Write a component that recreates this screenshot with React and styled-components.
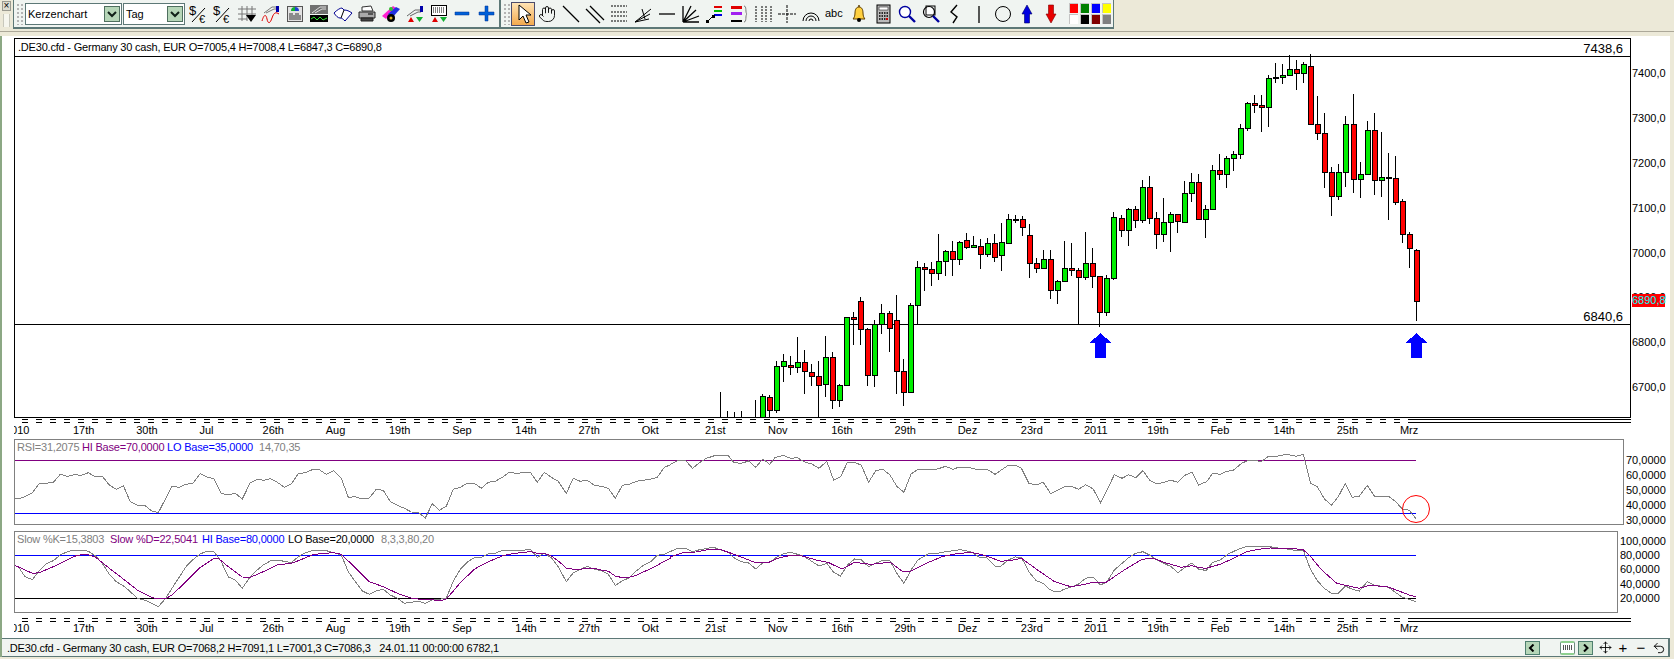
import React from 'react';
import styled, { createGlobalStyle } from 'styled-components';
import { Hand, Move, Undo2 } from 'lucide-react';

const GlobalStyle = createGlobalStyle`
  html, body {
    margin: 0;
    width: 1674px;
    height: 659px;
    overflow: hidden;
    background: #ece9d8;
    font-family: "Liberation Sans", Arial, sans-serif;
    font-size: 11px;
    color: #000;
  }
`;

const BAR_BG = '#f0f4f1';
const BAR_LINE = '#5d7877';
const GREY = '#808080';
const PURPLE = '#800080';
const BLUE = '#0000ff';

/* ---- chart data, page pixels ---- */

// [colour, body top, body bottom, wick top, wick bottom]; null = no bar that day
const candles = [
  ['w', 0, 0, 392, 417], ['w', 0, 0, 411, 417], ['w', 0, 0, 412, 417], ['w', 0, 0, 411, 417], null,
  ['w', 0, 0, 400, 417], ['g', 396, 420, 394, 417], ['r', 397, 410, 395, 417], ['g', 366, 410, 361, 412],
  ['g', 361, 366, 354, 381], ['r', 365, 367, 356, 374], ['g', 362, 367, 337, 372], ['r', 362, 371, 350, 393],
  ['r', 372, 376, 364, 385], ['r', 376, 385, 361, 417], ['g', 357, 384, 336, 396], ['r', 357, 400, 352, 408],
  ['g', 385, 400, 384, 406], ['g', 317, 385, 317, 385], ['r', 317, 319, 312, 344], ['r', 301, 329, 297, 344],
  ['r', 329, 375, 328, 385], ['g', 324, 375, 320, 386], ['g', 313, 324, 304, 333], ['r', 313, 328, 311, 351],
  ['r', 320, 371, 295, 393], ['r', 371, 392, 359, 405], ['g', 305, 392, 303, 392], ['g', 267, 305, 261, 324],
  ['r', 267, 269, 263, 290], ['r', 269, 273, 262, 285], ['g', 261, 273, 234, 279], ['g', 251, 261, 250, 275],
  ['r', 251, 259, 241, 275], ['g', 242, 259, 241, 264], ['r', 240, 247, 233, 248], ['g', 245, 247, 236, 247],
  ['r', 246, 254, 239, 268], ['g', 243, 254, 238, 256], ['r', 243, 257, 234, 261], ['g', 242, 255, 223, 270],
  ['g', 219, 243, 214, 243], ['k', 219, 220, 215, 222], ['r', 219, 227, 216, 235], ['r', 235, 263, 224, 277],
  ['r', 263, 268, 258, 272], ['g', 259, 268, 250, 268], ['r', 259, 290, 250, 298], ['g', 281, 290, 280, 303],
  ['g', 268, 281, 241, 281], ['r', 268, 270, 243, 275], ['r', 270, 277, 268, 324], ['g', 263, 277, 232, 279],
  ['r', 263, 276, 248, 287], ['r', 276, 312, 276, 326], ['g', 278, 312, 275, 315], ['g', 217, 278, 212, 279],
  ['r', 218, 230, 215, 236], ['g', 209, 230, 208, 245], ['r', 209, 220, 206, 227], ['g', 187, 220, 180, 222],
  ['r', 187, 218, 176, 223], ['r', 218, 234, 212, 248], ['g', 222, 234, 198, 241], ['g', 214, 222, 212, 251],
  ['r', 214, 221, 214, 232], ['g', 193, 222, 181, 222], ['g', 182, 193, 173, 201], ['r', 182, 219, 174, 219],
  ['g', 209, 219, 205, 237], ['g', 170, 209, 165, 209], ['r', 170, 174, 154, 179], ['g', 158, 174, 156, 187],
  ['g', 154, 158, 151, 170], ['g', 128, 154, 124, 158], ['g', 103, 128, 102, 130], ['r', 103, 105, 95, 112],
  ['r', 105, 107, 95, 131], ['g', 78, 107, 75, 126], ['k', 77, 78, 63, 82], ['g', 75, 77, 64, 83],
  ['g', 69, 75, 55, 75], ['r', 69, 73, 60, 89], ['g', 64, 73, 62, 82], ['r', 66, 124, 54, 124],
  ['r', 124, 133, 96, 139], ['r', 133, 172, 113, 187], ['r', 172, 196, 167, 215], ['g', 172, 196, 164, 199],
  ['g', 124, 172, 116, 186], ['r', 124, 179, 94, 192], ['g', 174, 179, 162, 197], ['g', 130, 174, 121, 174],
  ['r', 130, 180, 113, 194], ['g', 177, 180, 132, 196], ['k', 177, 178, 153, 219], ['r', 178, 202, 156, 204],
  ['r', 201, 234, 199, 242], ['r', 234, 248, 232, 267], ['r', 250, 301, 249, 320],
];

// traced curves come in runs, each with the origin and scale it was read at
const run = (x0, y0, sx, pts) => pts.map(([x, y]) => `${(x0 + x / sx).toFixed(1)},${(y0 + y / 3).toFixed(1)}`);

const rsiLine = [
  ...run(0, 385, 3, [[44,339],[55,341],[75,335],[97,323],[118,295],[139,295],[160,292],[181,268],[202,274],[223,269],[244,271],[265,263],[286,276],[307,274],[328,300],[349,313],[370,302],[391,350],[412,360],[433,360],[454,377],[475,383],[516,304],[537,307],[558,298],[579,295],[600,266],[621,276],[642,281],[664,325],[685,330],[706,325],[727,342],[751,293],[772,283],[790,286],[811,281],[832,292],[853,307],[874,297],[895,266],[916,263],[937,254],[958,254],[979,268],[1002,257],[1024,280],[1045,337],[1066,335],[1087,342],[1108,339],[1129,313],[1150,316],[1171,350],[1192,361],[1213,370],[1234,381],[1255,382]]),
  ...run(410, 436, 3, [[46,246],[67,203],[88,223],[109,211],[130,160],[151,154],[172,142],[193,142],[214,157],[235,139],[256,136],[277,124],[298,109],[319,112],[361,109],[382,139],[403,109],[424,124],[445,136],[469,172],[490,127],[511,136],[532,133],[553,148],[574,151],[595,157],[616,187],[637,148],[658,145],[679,136],[700,133],[721,130],[742,124],[763,94],[780,87]]),
  ...run(660, 400, 2.8, [[30,193],[50,182],[72,182],[91,205],[111,188],[130,175],[150,168],[170,165],[190,166],[207,188],[228,190],[248,183],[268,202],[288,177],[307,193],[322,173],[345,166],[365,175],[385,173],[405,186],[425,192],[445,205],[467,184],[486,240],[505,231],[525,187],[545,187],[564,196],[584,247],[604,212],[624,208],[644,225],[663,259],[683,277],[703,222],[722,208],[751,208],[777,207],[800,199],[820,208],[838,201],[870,204],[895,210],[915,207],[938,223],[975,196],[995,196],[1012,205],[1033,250],[1053,255],[1073,247],[1094,281],[1133,260],[1155,260],[1172,268],[1192,254],[1213,267],[1233,308],[1252,270],[1272,224],[1294,235],[1312,224],[1332,233],[1352,212],[1372,242],[1392,252],[1431,241],[1450,247],[1470,226],[1489,216],[1508,256]]),
  ...run(1200, 405, 3, [[0,238],[20,230],[38,205],[60,208],[80,199],[100,196],[125,175],[145,166],[185,169],[205,154],[235,153],[260,148],[288,154],[310,148],[332,235],[352,245],[373,281],[394,301],[415,275],[436,235],[457,277],[478,274],[502,241],[523,273],[565,273],[586,289],[607,312],[628,316],[648,341]]),
].join(' ');

const slowK = [
  ...run(0, 385, 3, [[44,542],[55,545],[75,575],[97,584],[118,557],[139,536],[160,527],[181,510],[202,500],[223,495],[244,495],[265,499],[286,512],[307,535],[328,568],[349,590],[370,602],[391,620],[412,640],[433,645],[454,654],[475,665],[497,640],[516,610],[558,545],[579,524],[600,507],[621,499],[642,500],[664,530],[685,576],[706,585],[727,610],[751,575],[772,555],[790,540],[811,528],[832,525],[874,533],[895,515],[916,503],[937,497],[958,495],[979,497],[1002,503],[1024,510],[1045,560],[1066,590],[1087,618],[1108,628],[1129,618],[1150,613],[1171,630],[1192,640],[1213,655],[1234,652],[1255,648]]),
  ...run(410, 436, 3, [[46,502],[67,492],[88,490],[109,487],[130,435],[151,400],[172,378],[193,365],[214,364],[235,353],[256,352],[277,343],[340,343],[361,340],[382,364],[403,352],[424,365],[445,392],[469,437],[490,410],[511,400],[532,391],[553,400],[574,404],[595,415],[616,448],[637,435],[658,425],[679,405],[700,388],[721,378],[742,358],[763,355],[780,347]]),
  ...run(660, 400, 2.8, [[50,445],[72,445],[91,455],[111,449],[150,442],[170,450],[190,455],[207,473],[228,485],[248,489],[268,507],[288,488],[307,487],[322,475],[345,461],[365,457],[385,463],[405,470],[445,498],[467,490],[486,517],[505,528],[525,495],[545,477],[564,480],[584,500],[604,490],[624,481],[644,482],[663,520],[683,550],[703,510],[722,480],[751,462],[777,460],[800,455],[840,449],[870,455],[895,472],[915,474],[938,498],[955,498],[975,480],[995,471],[1012,472],[1033,515],[1053,542],[1073,550],[1090,568],[1105,575],[1120,575],[1130,568],[1155,560],[1172,552],[1192,535],[1213,531],[1233,555],[1252,545],[1272,510],[1294,490],[1312,473],[1332,460],[1352,455],[1372,466],[1392,480],[1431,500],[1450,518],[1470,502],[1489,489],[1508,507]]),
  ...run(1200, 405, 3, [[0,492],[18,497],[38,472],[60,465],[85,447],[110,435],[140,424],[175,426],[200,424],[235,429],[270,433],[290,438],[310,435],[330,490],[352,527],[373,550],[394,565],[415,565],[436,543],[457,553],[478,558],[502,530],[523,540],[565,547],[586,562],[607,577],[628,583],[648,590]]),
].join(' ');

const slowD = [
  ...run(0, 385, 3, [[44,541],[75,555],[97,565],[118,563],[160,545],[202,525],[223,514],[244,509],[265,509],[286,516],[328,550],[370,582],[412,615],[454,637],[475,642],[497,641],[516,630],[558,590],[600,548],[642,520],[655,520],[685,545],[727,576],[751,577],[790,560],[832,540],[874,535],[895,527],[937,510],[958,506],[1002,503],[1024,508],[1066,548],[1108,590],[1150,605],[1192,625],[1234,639],[1255,642]]),
  ...run(410, 436, 3, [[30,491],[60,490],[88,495],[109,489],[130,465],[151,440],[172,420],[193,400],[214,388],[235,378],[256,368],[277,360],[298,355],[340,349],[361,347],[382,352],[403,352],[424,360],[445,375],[469,396],[490,400],[511,400],[532,397],[553,397],[574,402],[595,406],[616,420],[637,425],[658,424],[679,418],[700,408],[721,399],[742,388],[763,376],[780,368]]),
  ...run(660, 400, 2.8, [[30,470],[65,458],[100,456],[130,450],[170,449],[200,460],[225,470],[265,487],[305,487],[330,475],[365,466],[395,467],[440,481],[470,487],[510,507],[545,487],[590,493],[645,487],[680,515],[700,515],[745,490],[790,470],[825,462],[870,457],[905,465],[955,484],[995,479],[1012,475],[1060,512],[1105,545],[1150,560],[1190,553],[1215,546],[1250,546],[1300,510],[1350,478],[1380,475],[1420,490],[1460,502],[1490,497]]),
  ...run(1200, 405, 3, [[0,488],[18,490],[60,478],[105,458],[140,440],[175,433],[210,429],[270,430],[310,434],[332,455],[365,495],[410,535],[436,541],[478,550],[502,543],[523,542],[565,546],[607,562],[628,570],[648,575]]),
].join(' ');

const dateLabels = ['17th', '30th', 'Jul', '26th', 'Aug', '19th', 'Sep', '14th', '27th', 'Okt', '21st', 'Nov', '16th', '29th', 'Dez', '23rd', '2011', '19th', 'Feb', '14th', '25th', 'Mrz'];
const priceLabels = ['7400,0', '7300,0', '7200,0', '7100,0', '7000,0', '6900,0', '6800,0', '6700,0'];
const rsiLabels = ['70,0000', '60,0000', '50,0000', '40,0000', '30,0000'];
const stochLabels = ['100,0000', '80,0000', '60,0000', '40,0000', '20,0000'];
const swatches = ['#ff0000', '#008000', '#0000ff', '#ffff00', '#ffffff', '#000000', '#800000', '#808080'];

/* ---- toolbars ---- */

const Page = styled.div`
  display: flex;
  flex-direction: column;
  width: 1674px;
  height: 659px;
`;

const TopBar = styled.div`
  display: flex;
  height: 29px;
  flex: none;
`;

const DockHandle = styled.div`
  width: 13px;
  flex: none;
  display: flex;
  flex-direction: column;
  align-items: center;
  padding-top: 1px;
  box-sizing: border-box;
`;

const CloseBox = styled.div`
  width: 9px;
  height: 10px;
  border: 1px solid #9a9a90;
  box-sizing: border-box;
  font-size: 10px;
  line-height: 8px;
  text-align: center;
  background: #dcdcd0;
`;

const DockLines = styled.div`
  width: 5px;
  height: 13px;
  margin-top: 3px;
  border-left: 1px solid #c8c8bc;
  border-right: 1px solid #c8c8bc;
  background: #f6f6ee;
`;

const Toolbar = styled.div`
  display: flex;
  align-items: center;
  height: 29px;
  box-sizing: border-box;
  background: ${BAR_BG};
  border-left: 1px solid ${BAR_LINE};
  border-right: 1px solid ${BAR_LINE};
  border-bottom: 2px solid ${BAR_LINE};
  padding-left: 2px;
`;

const Grip = styled.div`
  width: 8px;
  height: 22px;
  flex: none;
  background-image: radial-gradient(#b4b4b4 1.1px, transparent 1.2px);
  background-size: 4px 4px;
`;

const Combo = styled.div`
  display: flex;
  align-items: center;
  justify-content: space-between;
  width: ${p => p.$width}px;
  height: 22px;
  margin-left: ${p => p.$gap}px;
  flex: none;
  box-sizing: border-box;
  padding: 0 1px 0 2px;
  background: #fff;
  border: 1px solid ${BAR_LINE};
`;

const ComboArrow = styled.div`
  width: 16px;
  height: 16px;
  box-sizing: border-box;
  display: flex;
  align-items: center;
  justify-content: center;
  background: #b6d6b8;
  border: 1px solid #4f6f5f;
`;

const ToolSlot = styled.div`
  width: 24px;
  height: 24px;
  flex: none;
  display: flex;
  align-items: center;
  justify-content: center;
  box-sizing: border-box;
  ${p => p.$active && `
    background: linear-gradient(#ffe3b4, #f2a94e);
    border: 1px solid #4c4c6c;
  `}
`;

const SlotGap = styled.div`
  width: ${p => p.$width}px;
  flex: none;
`;

const Palette = styled.div`
  display: grid;
  grid-template-columns: repeat(4, 9px);
  grid-auto-rows: 10px;
  gap: 1px 2px;
  margin: 0 2px 0 6px;
`;

const Swatch = styled.div`
  box-sizing: border-box;
  background: ${p => p.$color};
  border-top: 1px solid #c4c4c4;
  border-left: 1px solid #c4c4c4;
`;

const BarShadow = styled.div`
  height: 7px;
  flex: none;
  box-sizing: border-box;
  padding-top: 2px;
  &::before {
    content: '';
    display: block;
    height: 1px;
    background: #aca899;
  }
`;

/* ---- chart window ---- */

const Workspace = styled.div`
  flex: none;
  height: 621px;
  margin-right: 4px;
  box-sizing: border-box;
  padding: 2px 0 0 12px;
  background: #fff;
  border-left: 2px solid #8ca884;
`;

const ChartRow = styled.div`
  display: flex;
  height: ${p => p.$height}px;
  margin-top: ${p => p.$top || 0}px;
`;

const Frame = styled.div`
  position: relative;
  width: ${p => p.$width}px;
  height: 100%;
  flex: none;
  box-sizing: border-box;
  border: 1px solid ${p => p.$line};
  svg { display: block; }
`;

const ChartTitle = styled.div`
  position: absolute;
  left: 3px;
  top: 2px;
  white-space: pre;
  line-height: 13px;
  letter-spacing: -0.2px;
`;

const LevelTag = styled.div`
  position: absolute;
  right: 7px;
  top: ${p => p.$top}px;
  font-size: 13px;
  line-height: 15px;
`;

const Legend = styled.div`
  position: absolute;
  left: 2px;
  top: 1px;
  display: flex;
  line-height: 13px;
  white-space: pre;
  letter-spacing: -0.2px;
`;

const LegendItem = styled.span`
  width: ${p => p.$width}px;
  flex: none;
  color: ${p => p.$color};
`;

const ValueAxis = styled.div`
  position: relative;
  display: flex;
  flex-direction: column;
  padding: ${p => p.$top}px 0 0 ${p => p.$left}px;
`;

const AxisLabel = styled.div`
  height: ${p => p.$step}px;
  flex: none;
  display: flex;
  align-items: center;
`;

const LastPrice = styled.div`
  position: absolute;
  left: 1px;
  top: 256px;
  width: 33px;
  height: 13px;
  line-height: 13px;
  background: #ff0000;
  color: #00ffff;
`;

const DateRail = styled.div`
  height: 5px;
  margin-top: ${p => p.$top}px;
  width: 1617px;
  display: flex;
`;

const DashedRail = styled.div`
  width: 1399px;
  flex: none;
  background:
    repeating-linear-gradient(90deg, transparent 0 8px, #000 8px 14px) 0 0 / 100% 1px no-repeat,
    repeating-linear-gradient(90deg, transparent 0 8px, #000 8px 14px) 0 3px / 100% 1px no-repeat;
`;

const SolidRail = styled.div`
  flex: 1;
  box-sizing: border-box;
  height: 4px;
  border-top: 1px solid #000;
  border-bottom: 1px solid #000;
`;

const DateAxis = styled.div`
  display: flex;
  width: 1600px;
  height: ${p => p.$height}px;
  line-height: ${p => p.$height}px;
  overflow: hidden;
`;

const FirstDate = styled.span`
  width: 68px;
  margin-left: -9px;
  flex: none;
`;

const DateCell = styled.span`
  width: 63.2px;
  flex: none;
`;

const StatusBar = styled.div`
  display: flex;
  align-items: center;
  justify-content: space-between;
  height: 19px;
  margin: 4px 0 0 -12px;
  box-sizing: border-box;
  padding-left: 5px;
  background: ${BAR_BG};
  border: 1px solid ${BAR_LINE};
  border-left: none;
  border-right-width: 2px;
  white-space: pre;
`;

const StatusText = styled.span`
  letter-spacing: -0.2px;
`;

const ScrollControls = styled.div`
  display: flex;
  align-items: center;
  height: 100%;
`;

const NavButton = styled.div`
  width: 15px;
  height: 14px;
  flex: none;
  display: flex;
  align-items: center;
  justify-content: center;
  box-sizing: border-box;
  background: #b6d6b8;
  border: 1px solid #4f7f6f;
  margin-left: ${p => p.$gap || 0}px;
`;

const ScrollTrack = styled.div`
  width: 20px;
  height: 14px;
  flex: none;
  background-image: radial-gradient(#c8c8c8 0.6px, transparent 0.7px);
  background-size: 2px 2px;
`;

const ScrollThumb = styled.div`
  width: 15px;
  height: 14px;
  flex: none;
  box-sizing: border-box;
  border: 1px solid #6f8f80;
  border-top: 2px solid #8fd08f;
  border-bottom: 2px solid #8fd08f;
  border-radius: 2px;
  background: repeating-linear-gradient(90deg, #555 0 1px, #fff 1px 2px) center / 9px 5px no-repeat #fff;
`;

const ViewButton = styled.div`
  width: 18px;
  height: 17px;
  flex: none;
  display: flex;
  align-items: center;
  justify-content: center;
  font-size: 15px;
  line-height: 15px;
`;

/* ---- drawings ---- */

const Ico = ({ children, size = 20 }) => (
  <svg width={size} height={size} viewBox="0 0 20 20" fill="none">{children}</svg>
);

const DollarEuro = () => (
  <Ico>
    <text x="0" y="11" fontSize="13" fontFamily="Liberation Sans" fill="#000">$</text>
    <text x="10" y="19" fontSize="11" fontFamily="Liberation Sans" fill="#000">€</text>
    <path d="M3 18 L16 4" stroke="#000" />
  </Ico>
);

const gridDrop = (
  <Ico>
    <path d="M5 2v15M10 2v15M15 2v9M1 5h18M1 10h18M1 15h9" stroke="#777" />
    <path d="M9 11h10l-5 7z" fill="#000" />
  </Ico>
);
const trendWave = (
  <Ico>
    <path d="M3 9l8-6h5M5 9l8-4h3" stroke="#777" />
    <rect x="15" y="2" width="3" height="6" fill="#00a" />
    <path d="M1 17c2-7 4-7 5-2s3 5 5-1 4-6 7-4" stroke="#e00000" />
  </Ico>
);
const chartBox = (
  <Ico>
    <rect x="2.5" y="2.5" width="15" height="15" fill="#e2e2e2" stroke="#555" />
    <path d="M10 3a4 4 0 014 4h-4z" fill="#2040d0" />
    <path d="M10 3a4 4 0 00-4 4h4z" fill="#10b030" />
    <path d="M5 9v7M7 9v7M9 11v5M11 9v7M13 9v7M15 11v5" stroke="#333" />
  </Ico>
);
const bannerChart = (
  <Ico>
    <rect x="1" y="1" width="18" height="9" fill="#707070" />
    <path d="M3 9l8-6h6M6 9l7-4h4" stroke="#ddd" />
    <rect x="1" y="11" width="18" height="7" fill="#000" />
    <path d="M2 15l3-2 3 3 3-3 3 3 4-2" stroke="#30e030" />
  </Ico>
);
const bookOpen = (
  <Ico>
    <path d="M1 9c3-3 6-5 8-5l2 2c3 0 5 1 8 3l-7 8c-2-2-3-3-5-3-2 0-4-2-6-5z" fill="#fff" stroke="#000090" />
    <path d="M8 14L11 6" stroke="#000" />
  </Ico>
);
const printer = (
  <Ico>
    <path d="M5 3l9-1 2 5H5z" fill="#fff" stroke="#333" />
    <path d="M2 8h16v6H2z" fill="#aaa" stroke="#222" />
    <path d="M4 14h12v3H4z" fill="#444" stroke="#222" />
    <path d="M11 10h5" stroke="#000" />
  </Ico>
);
const paintSet = (
  <Ico>
    <path d="M1 12L12 2l3 2L5 15z" fill="#ff20d0" />
    <path d="M7 10l8-7 4 2-8 9z" fill="#2030e0" />
    <circle cx="10" cy="5" r="2" fill="#30c030" />
    <circle cx="10" cy="14" r="4" fill="#000" />
    <circle cx="10" cy="14" r="1.5" fill="#e0b020" />
  </Ico>
);
const fanTriangles = (
  <Ico>
    <path d="M2 12L10 6h6M5 12l8-4h3" stroke="#666" />
    <rect x="15" y="2" width="3" height="6" fill="#00a" />
    <path d="M3 18l3-5 3 5z" fill="#e00000" />
    <path d="M11 13h7l-3.5 5z" fill="#10b030" />
  </Ico>
);
const keyList = (
  <Ico>
    <rect x="2.5" y="1.5" width="15" height="10" fill="#fff" stroke="#000" />
    <path d="M4 4h12M4 6h12M4 8h12" stroke="#000" strokeDasharray="1 1" />
    <path d="M3 18l3-5 3 5z" fill="#e00000" />
    <path d="M11 13h7l-3.5 5z" fill="#10b030" />
  </Ico>
);
const minusBlue = (
  <Ico><path d="M2 8h14v3H2z" fill="#0060d8" stroke="#003090" strokeWidth=".5" /></Ico>
);
const plusBlue = (
  <Ico><path d="M8 2h3v6h6v3h-6v6H8v-6H2V8h6z" fill="#0060d8" stroke="#003090" strokeWidth=".5" /></Ico>
);

const firstTools = [
  <DollarEuro />, <DollarEuro />, gridDrop, trendWave, chartBox, bannerChart,
  bookOpen, printer, paintSet, fanTriangles, keyList, minusBlue, plusBlue,
];

const cursorArrow = (
  <Ico><path d="M6 1v15l4-4 3 7 3-1-3-7h5z" fill="#fff" stroke="#000" /></Ico>
);
const drawingTools = [
  <Hand size={18} strokeWidth={1.2} />,
  <Ico><path d="M2 2l16 16" stroke="#000" strokeWidth="1.3" /></Ico>,
  <Ico><path d="M1 5l14 14M5 2l14 14" stroke="#000" strokeWidth="1.3" /></Ico>,
  <Ico><path d="M2 2h16M2 8h16M2 12h16M2 17h16" stroke="#000" strokeDasharray="2 1" /></Ico>,
  <Ico><path d="M2 18L18 5M2 18L17 10M2 18l14-3M9 5l3 10" stroke="#000" /></Ico>,
  <Ico><path d="M2 10h16" stroke="#000" strokeWidth="1.3" /></Ico>,
  <Ico><path d="M2 18V2M2 18L10 2M2 18L15 6M2 18l16-6M2 18h16" stroke="#000" strokeWidth="1.3" /></Ico>,
  <Ico>
    <path d="M9 2h8v2H9z" fill="#e00000" /><path d="M9 6h8v2H9z" fill="#00c000" /><path d="M9 10h8v2H9z" fill="#0000e0" />
    <path d="M2 18l6-6" stroke="#000" /><rect x="1" y="16" width="3" height="3" fill="#000" /><rect x="7" y="11" width="3" height="3" fill="#000" />
  </Ico>,
  <Ico>
    <path d="M2 2h11v3H2z" fill="#e00000" /><path d="M2 8h11v3H2z" fill="#a020f0" /><path d="M2 16h11v2H2z" fill="#000" />
    <path d="M15 2c3 0 1 7 3 8-2 1 0 8-3 8" stroke="#777" />
  </Ico>,
  <Ico><path d="M3 2v16M9 2v16M13 2v16M18 2v16" stroke="#000" strokeDasharray="2 1" /></Ico>,
  <Ico><path d="M10 1v18M1 10h18" stroke="#000" strokeDasharray="3 1" /></Ico>,
  <Ico><path d="M2 17a8 8 0 0116 0M5 17a5 5 0 0110 0M8 17a2 2 0 014 0" stroke="#000" /></Ico>,
  <Ico><text x="0" y="13" fontSize="11" fontFamily="Liberation Sans" fill="#000">abc</text></Ico>,
  <Ico>
    <path d="M10 3c-3 0-4 3-4 6 0 3-1 5-2 6h12c-1-1-2-3-2-6 0-3-1-6-4-6z" fill="#ffd040" stroke="#604000" />
    <circle cx="10" cy="2" r="1" fill="#604000" /><circle cx="10" cy="16" r="2" fill="#000" />
  </Ico>,
  <Ico>
    <rect x="4" y="1" width="13" height="18" fill="#bbb" stroke="#000" />
    <rect x="6" y="3" width="9" height="3" fill="#fff" stroke="#000" strokeWidth=".5" />
    <path d="M6 9h9M6 12h9M6 15h7" stroke="#000" strokeWidth="1.4" strokeDasharray="1.5 1" />
    <rect x="13" y="14" width="2" height="2" fill="#d00000" />
  </Ico>,
  <Ico><circle cx="8" cy="8" r="5.5" fill="#fff" stroke="#0000a0" strokeWidth="1.4" /><path d="M12 12l6 6" stroke="#0000a0" strokeWidth="2.4" /></Ico>,
  <Ico><circle cx="8" cy="8" r="5.5" fill="#fff" stroke="#000" strokeWidth="1.2" /><rect x="5" y="2" width="9" height="9" stroke="#000" /><path d="M12 12l6 6" stroke="#0000a0" strokeWidth="2.4" /></Ico>,
  <Ico><path d="M12 1L6 8l6 5-4 6" stroke="#000" strokeWidth="1.4" /></Ico>,
  <Ico><path d="M10 2v17" stroke="#000" strokeWidth="1.3" /></Ico>,
  <Ico><circle cx="10" cy="10" r="7.5" stroke="#000" /></Ico>,
  <Ico><path d="M10 1l5 9h-2.5v9h-5v-9H5z" fill="#0000e0" stroke="#000060" strokeWidth=".6" /></Ico>,
  <Ico><path d="M10 19l5-9h-2.5V1h-5v9H5z" fill="#e80000" stroke="#800000" strokeWidth=".6" /></Ico>,
];

const Chevron = ({ left }) => (
  <svg width="9" height="8" viewBox="0 0 9 8">
    {left
      ? <path d="M5.5 0.5 2 4l3.5 3.5" fill="none" stroke="#000" strokeWidth="2" />
      : <path d="M3 0.5 6.5 4 3 7.5" fill="none" stroke="#000" strokeWidth="2" />}
  </svg>
);

const ComboChevron = () => (
  <svg width="10" height="8" viewBox="0 0 10 8">
    <path d="M1 2l4 4 4-4" fill="none" stroke="#102018" strokeWidth="2" />
  </svg>
);

const CANDLE_FILL = { g: '#00ee00', r: '#ff0000', k: '#000' };

const CandleBars = () => candles.map((c, i) => {
  if (!c) return null;
  const [kind, top, bottom, wickTop, wickBottom] = c;
  const x = Math.floor(720.3 + 7.03 * i);
  return (
    <g key={i}>
      <rect x={x} y={wickTop} width="1" height={wickBottom - wickTop + 1} fill="#000" />
      {kind !== 'w' && (
        <rect x={x - 1.5} y={top + 0.5} width="5" height={bottom - top} fill={CANDLE_FILL[kind]} stroke="#000" />
      )}
    </g>
  );
});

const BlueArrow = ({ x }) => (
  <path d={`M${x} 333l11 10h-5.500v15h-11v-15h-5.500z`} fill={BLUE} />
);

const MainChart = () => (
  <svg width="1615" height="378" viewBox="15 39 1615 378" shapeRendering="crispEdges">
    <rect x="15" y="56" width="1615" height="1" fill="#000" />
    <rect x="15" y="324" width="1615" height="1" fill="#000" />
    <CandleBars />
    <BlueArrow x={1100.5} />
    <BlueArrow x={1416.5} />
  </svg>
);

const RsiChart = () => (
  <svg width="1608" height="84" viewBox="15 440 1608 84" shapeRendering="crispEdges" fill="none">
    <rect x="15" y="460" width="1401" height="1" fill={PURPLE} />
    <rect x="15" y="513" width="1401" height="1" fill={BLUE} />
    <polyline points={rsiLine} stroke={GREY} />
    <circle cx="1416" cy="509" r="13.500" stroke="#ff0000" shapeRendering="auto" />
  </svg>
);

const StochChart = () => (
  <svg width="1602" height="80" viewBox="15 532 1602 80" shapeRendering="crispEdges" fill="none">
    <rect x="15" y="555" width="1401" height="1" fill={BLUE} />
    <rect x="15" y="598" width="1401" height="1" fill="#000" />
    <polyline points={slowK} stroke={GREY} />
    <polyline points={slowD} stroke={PURPLE} />
  </svg>
);

const DateRow = ({ height }) => (
  <DateAxis $height={height}>
    <FirstDate>2010</FirstDate>
    {dateLabels.map((label, i) => <DateCell key={i}>{label}</DateCell>)}
  </DateAxis>
);

export default function App() {
  return (
    <Page>
      <GlobalStyle />
      <TopBar>
        <DockHandle>
          <CloseBox>×</CloseBox>
          <DockLines />
        </DockHandle>
        <Toolbar>
          <Grip />
          <Combo $width={97} $gap={1}>Kerzenchart<ComboArrow><ComboChevron /></ComboArrow></Combo>
          <Combo $width={62} $gap={1}>Tag<ComboArrow><ComboChevron /></ComboArrow></Combo>
          <SlotGap $width={2} />
          {firstTools.map((icon, i) => <ToolSlot key={i}>{icon}</ToolSlot>)}
        </Toolbar>
        <Toolbar>
          <Grip />
          <ToolSlot $active>{cursorArrow}</ToolSlot>
          {drawingTools.map((icon, i) => <ToolSlot key={i}>{icon}</ToolSlot>)}
          <Palette>
            {swatches.map(color => <Swatch key={color} $color={color} />)}
          </Palette>
        </Toolbar>
      </TopBar>
      <BarShadow />
      <Workspace>
        <ChartRow $height={380}>
          <Frame $width={1617} $line="#000">
            <MainChart />
            <ChartTitle>.DE30.cfd - Germany 30 cash, EUR O=7005,4 H=7008,4 L=6847,3 C=6890,8</ChartTitle>
            <LevelTag $top={2}>7438,6</LevelTag>
            <LevelTag $top={270}>6840,6</LevelTag>
          </Frame>
          <ValueAxis $top={13} $left={1}>
            {priceLabels.map(label => <AxisLabel key={label} $step={44.82}>{label}</AxisLabel>)}
            <LastPrice>6890,8</LastPrice>
          </ValueAxis>
        </ChartRow>
        <DateRail $top={1}><DashedRail /><SolidRail /></DateRail>
        <DateRow height={13} />
        <ChartRow $height={86} $top={2}>
          <Frame $width={1610} $line={GREY}>
            <RsiChart />
            <Legend>
              <LegendItem $width={65} $color={GREY}>RSI=31,2075</LegendItem>
              <LegendItem $width={85} $color={PURPLE}>HI Base=70,0000</LegendItem>
              <LegendItem $width={92} $color={BLUE}>LO Base=35,0000</LegendItem>
              <LegendItem $width={60} $color={GREY}>14,70,35</LegendItem>
            </Legend>
          </Frame>
          <ValueAxis $top={13} $left={2}>
            {rsiLabels.map(label => <AxisLabel key={label} $step={15.2}>{label}</AxisLabel>)}
          </ValueAxis>
        </ChartRow>
        <ChartRow $height={82} $top={6}>
          <Frame $width={1604} $line={GREY}>
            <StochChart />
            <Legend>
              <LegendItem $width={93} $color={GREY}>Slow %K=15,3803</LegendItem>
              <LegendItem $width={92} $color={PURPLE}>Slow %D=22,5041</LegendItem>
              <LegendItem $width={86} $color={BLUE}>HI Base=80,0000</LegendItem>
              <LegendItem $width={93} $color="#000">LO Base=20,0000</LegendItem>
              <LegendItem $width={70} $color={GREY}>8,3,3,80,20</LegendItem>
            </Legend>
          </Frame>
          <ValueAxis $top={3} $left={2}>
            {stochLabels.map(label => <AxisLabel key={label} $step={14.2}>{label}</AxisLabel>)}
          </ValueAxis>
        </ChartRow>
        <DateRail $top={5}><DashedRail /><SolidRail /></DateRail>
        <DateRow height={11} />
        <StatusBar>
          <StatusText>.DE30.cfd - Germany 30 cash, EUR O=7068,2 H=7091,1 L=7001,3 C=7086,3   24.01.11 00:00:00 6782,1</StatusText>
          <ScrollControls>
            <NavButton><Chevron left /></NavButton>
            <ScrollTrack />
            <ScrollThumb />
            <NavButton $gap={3}><Chevron /></NavButton>
            <SlotGap $width={3} />
            <ViewButton><Move size={13} strokeWidth={1.6} color="#000" /></ViewButton>
            <ViewButton>+</ViewButton>
            <ViewButton>−</ViewButton>
            <ViewButton><Undo2 size={14} strokeWidth={1.6} color="#000" /></ViewButton>
          </ScrollControls>
        </StatusBar>
      </Workspace>
    </Page>
  );
}
